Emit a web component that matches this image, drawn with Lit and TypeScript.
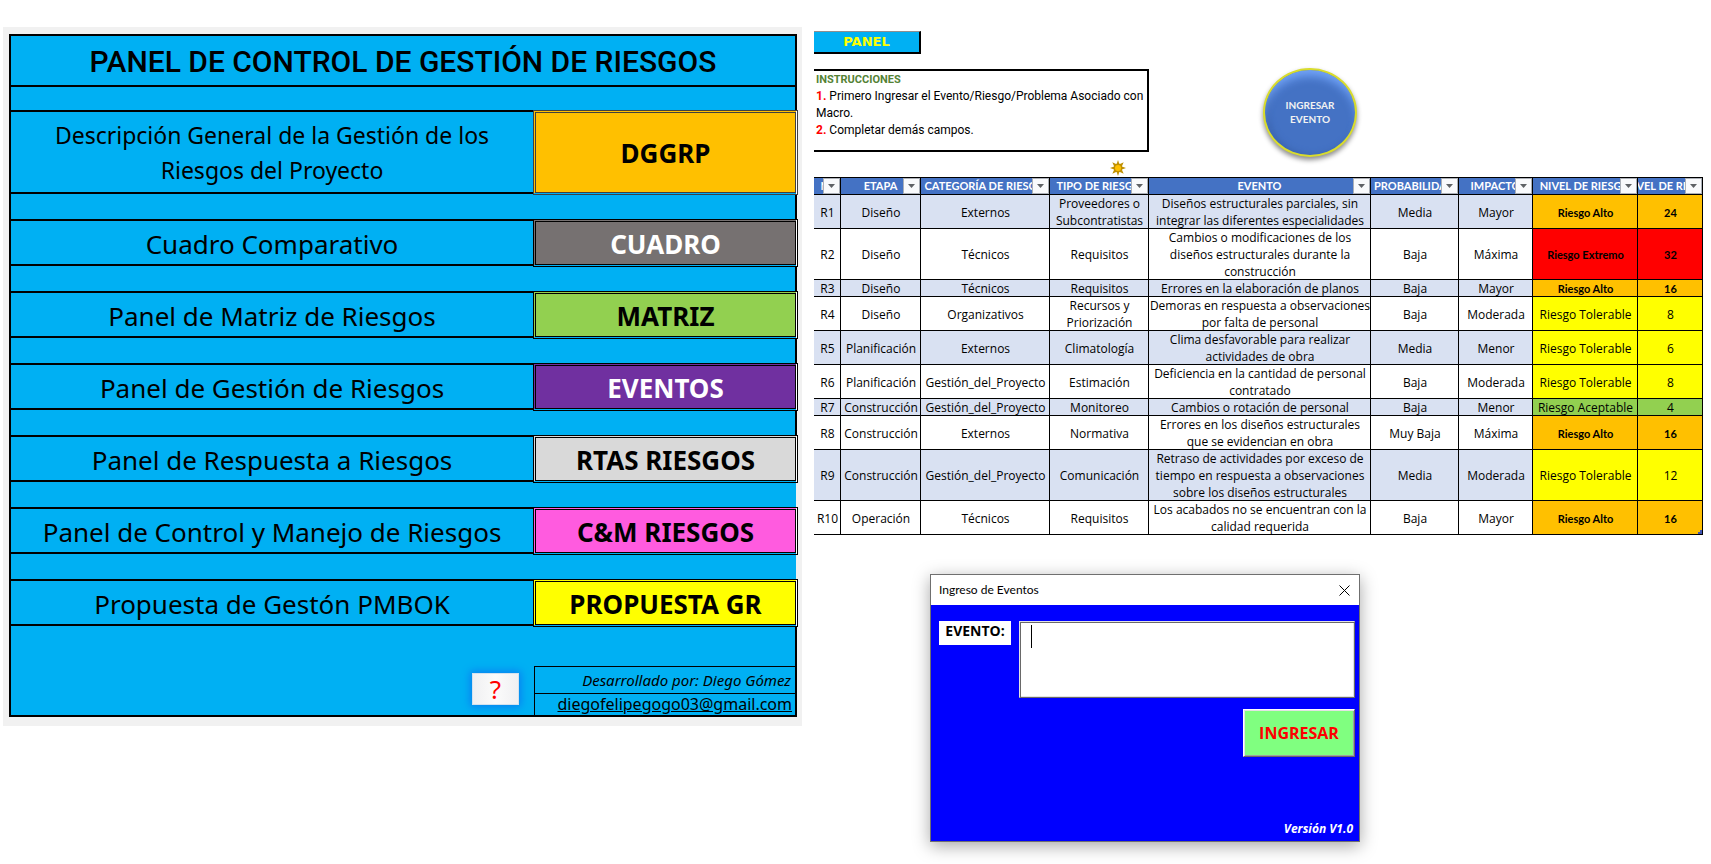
import { LitElement, html, css } from "lit";
import { customElement, property } from "lit/decorators.js";

interface Destination {
  label: string;
  action: string;
  tone: string;
  tall?: boolean;
  open?: boolean;
}

interface RiskEvent {
  id: string;
  stage: string;
  category: string;
  type: string[];
  event: string[];
  probability: string;
  impact: string;
  level: string;
  score: number;
}

const DESTINATIONS: Destination[] = [
  { label: "Descripción General de la Gestión de los Riesgos del Proyecto", action: "DGGRP", tone: "amber", tall: true },
  { label: "Cuadro Comparativo", action: "CUADRO", tone: "gray" },
  { label: "Panel de Matriz de Riesgos", action: "MATRIZ", tone: "green" },
  { label: "Panel de Gestión de Riesgos", action: "EVENTOS", tone: "purple" },
  { label: "Panel de Respuesta a Riesgos", action: "RTAS RIESGOS", tone: "silver" },
  { label: "Panel de Control y Manejo de Riesgos", action: "C&M RIESGOS", tone: "pink", open: true },
  { label: "Propuesta de Gestón PMBOK", action: "PROPUESTA GR", tone: "yellow", open: true },
];

const COLUMNS: { title: string; width: number }[] = [
  { title: "N°", width: 27 },
  { title: "ETAPA", width: 80 },
  { title: "CATEGORÍA DE RIESGO", width: 129 },
  { title: "TIPO DE RIESGO", width: 99 },
  { title: "EVENTO", width: 222 },
  { title: "PROBABILIDAD", width: 88 },
  { title: "IMPACTO", width: 74 },
  { title: "NIVEL DE RIESGO", width: 105 },
  { title: "NIVEL DE RIESGO", width: 65 },
];

const EVENTS: RiskEvent[] = [
  { id: "R1", stage: "Diseño", category: "Externos", type: ["Proveedores o", "Subcontratistas"], event: ["Diseños estructurales parciales, sin", "integrar las diferentes especialidades"], probability: "Media", impact: "Mayor", level: "Alto", score: 24 },
  { id: "R2", stage: "Diseño", category: "Técnicos", type: ["Requisitos"], event: ["Cambios o modificaciones de los", "diseños estructurales durante la", "construcción"], probability: "Baja", impact: "Máxima", level: "Extremo", score: 32 },
  { id: "R3", stage: "Diseño", category: "Técnicos", type: ["Requisitos"], event: ["Errores en la elaboración de planos"], probability: "Baja", impact: "Mayor", level: "Alto", score: 16 },
  { id: "R4", stage: "Diseño", category: "Organizativos", type: ["Recursos y", "Priorización"], event: ["Demoras en respuesta a observaciones", "por falta de personal"], probability: "Baja", impact: "Moderada", level: "Tolerable", score: 8 },
  { id: "R5", stage: "Planificación", category: "Externos", type: ["Climatología"], event: ["Clima desfavorable para realizar", "actividades de obra"], probability: "Media", impact: "Menor", level: "Tolerable", score: 6 },
  { id: "R6", stage: "Planificación", category: "Gestión_del_Proyecto", type: ["Estimación"], event: ["Deficiencia en la cantidad de personal", "contratado"], probability: "Baja", impact: "Moderada", level: "Tolerable", score: 8 },
  { id: "R7", stage: "Construcción", category: "Gestión_del_Proyecto", type: ["Monitoreo"], event: ["Cambios o rotación de personal"], probability: "Baja", impact: "Menor", level: "Aceptable", score: 4 },
  { id: "R8", stage: "Construcción", category: "Externos", type: ["Normativa"], event: ["Errores en los diseños estructurales", "que se evidencian en obra"], probability: "Muy Baja", impact: "Máxima", level: "Alto", score: 16 },
  { id: "R9", stage: "Construcción", category: "Gestión_del_Proyecto", type: ["Comunicación"], event: ["Retraso de actividades por exceso de", "tiempo en respuesta a observaciones", "sobre los diseños estructurales"], probability: "Media", impact: "Moderada", level: "Tolerable", score: 12 },
  { id: "R10", stage: "Operación", category: "Técnicos", type: ["Requisitos"], event: ["Los acabados no se encuentran con la", "calidad requerida"], probability: "Baja", impact: "Mayor", level: "Alto", score: 16 },
];

const lines = (parts: string[]) => parts.map((p, i) => (i ? html`<br />${p}` : p));

@customElement("control-panel")
export class ControlPanel extends LitElement {
  static styles = css`
    :host {
      display: block;
      background: #f1f1f1;
      padding: 7px 5px 9px 6px;
      font-family: "Noto Sans", "Open Sans", sans-serif;
      color: #000;
    }
    * {
      box-sizing: border-box;
    }
    .frame {
      background: #00b0f3;
      border: 2px solid #000;
    }
    .title {
      margin: 0;
      padding-top: 2px;
      height: 49px;
      display: flex;
      align-items: center;
      justify-content: center;
      font: 500 30px/36px Roboto, sans-serif;
      white-space: nowrap;
    }
    .spacer {
      height: 25px;
    }
    .spacer.first {
      border-top: 2px solid #000;
    }
    .spacer.open {
      margin-right: -2px;
      background: #00b0f3;
      border-right: 1px solid #f1f1f1;
    }
    .row {
      display: flex;
      height: 47px;
      border-top: 2px solid #000;
      border-bottom: 2px solid #000;
    }
    .row.tall {
      height: 84px;
    }
    .label {
      flex: 1;
      min-width: 0;
      padding: 4px 40px 0;
      display: flex;
      align-items: center;
      justify-content: center;
      text-align: center;
      font-size: 26px;
      line-height: 35px;
      white-space: nowrap;
    }
    .tall .label {
      padding-top: 2px;
      font-size: 23px;
      white-space: normal;
    }
    .go {
      flex: 0 0 265px;
      margin: -2px -3px -3px 0;
      padding: 1px;
      border: 1px solid #000;
      display: flex;
      position: relative;
      background-image: linear-gradient(#fff, #fff), linear-gradient(#00b0f3, #00b0f3);
      background-size: 1px 100%, 100% 1px;
      background-position: right, bottom;
      background-repeat: no-repeat;
      font: 700 26px/35px "Noto Sans", sans-serif;
      color: #000;
    }
    .go span {
      flex: 1;
      align-self: stretch;
      display: flex;
      align-items: center;
      justify-content: center;
      padding-top: 2px;
      border: 1px solid #000;
    }
    .amber {
      background-color: #ffc000;
      border-color: #404040;
    }
    .amber span {
      border-color: #404040;
    }
    .gray {
      background-color: #767171;
      color: #fff;
    }
    .green {
      background-color: #92d050;
    }
    .purple {
      background-color: #7030a0;
      color: #fff;
    }
    .silver {
      background-color: #d9d9d9;
    }
    .pink {
      background-color: #ff5bdf;
    }
    .yellow {
      background-color: #ffff00;
    }
    .foot {
      display: flex;
      justify-content: flex-end;
      align-items: flex-end;
      height: 89px;
    }
    .help {
      width: 47px;
      height: 32px;
      margin: 0 15px 10px 0;
      padding: 0;
      border: 1px solid #d4e2ee;
      background: linear-gradient(90deg, #f0f0f2, #fbfbfb 50%, #f0f0f2);
      box-shadow: 0 0 8px 2px #0a80f0;
      color: #f00;
      font: 26px/30px "Noto Sans", sans-serif;
    }
    .credits {
      width: 261px;
      height: 49px;
      border: solid #000;
      border-width: 1px 0 0 1px;
      text-align: right;
    }
    .author {
      height: 27px;
      padding-right: 4px;
      border-bottom: 1px solid #000;
      font-size: 15px;
      line-height: 26px;
      font-style: italic;
    }
    .mail {
      display: block;
      padding-right: 3px;
      color: #000;
      font-size: 16px;
      line-height: 21px;
    }
  `;

  render() {
    return html`
      <div class="frame">
        <h1 class="title">PANEL DE CONTROL DE GESTIÓN DE RIESGOS</h1>
        ${DESTINATIONS.map(
          (d, i) => html`
            <div class="spacer ${i === 0 ? "first" : ""} ${d.open ? "open" : ""}"></div>
            <div class="row ${d.tall ? "tall" : ""}">
              <div class="label">${d.label}</div>
              <button class="go ${d.tone}" type="button"><span>${d.action}</span></button>
            </div>
          `
        )}
        <div class="foot">
          <button class="help" type="button" aria-label="Ayuda">?</button>
          <div class="credits">
            <div class="author">Desarrollado por: Diego Gómez</div>
            <a class="mail" href="mailto:diegofelipegogo03@gmail.com">diegofelipegogo03@gmail.com</a>
          </div>
        </div>
      </div>
    `;
  }
}

@customElement("event-table")
export class EventTable extends LitElement {
  @property({ attribute: false }) events: RiskEvent[] = [];

  static styles = css`
    :host {
      display: block;
      font: 12px/17px "Open Sans", "Noto Sans", sans-serif;
      color: #000;
    }
    table {
      width: 100%;
      table-layout: fixed;
      border-spacing: 0;
      text-align: center;
    }
    th,
    td {
      position: relative;
      padding: 0;
      white-space: nowrap;
      box-shadow: inset -1px -1px 0 #000;
    }
    th {
      height: 18px;
      background: #4472c4;
      box-shadow: inset -1px -1px 0 #000, inset 0 1px 0 #000;
      font: 700 11px/18px Lato, sans-serif;
      color: #fff;
    }
    .head {
      display: flex;
      justify-content: center;
      overflow: hidden;
      margin-right: 1px;
    }
    .filter {
      position: absolute;
      top: 1px;
      right: 1px;
      width: 17px;
      height: 16px;
      padding: 0;
      border: 1px solid #abb0b8;
      background: #f9fafc;
      display: grid;
      place-items: center;
    }
    tbody tr:nth-child(odd) {
      background: #d9e1f2;
    }
    .Alto,
    .Extremo {
      font: 700 11px/17px Lato, sans-serif;
    }
    .Alto {
      background: #ffc000;
    }
    .Extremo {
      background: #ff0000;
    }
    .Tolerable {
      background: #ffff00;
    }
    .Aceptable {
      background: #92d050;
    }
    .grip {
      position: absolute;
      right: 1px;
      bottom: 1px;
    }
  `;

  render() {
    const last = this.events.length - 1;
    return html`
      <table>
        <colgroup>
          ${COLUMNS.map((c) => html`<col style="width:${c.width}px" />`)}
        </colgroup>
        <thead>
          <tr>
            ${COLUMNS.map(
              (c) => html`<th scope="col">
                <div class="head"><span>${c.title}</span></div>
                <button class="filter" type="button" aria-label="Filtrar ${c.title}">
                  <svg width="7" height="4" viewBox="0 0 7 4"><path d="M0 0h7L3.5 4z" fill="#5f6266" /></svg>
                </button>
              </th>`
            )}
          </tr>
        </thead>
        <tbody>
          ${this.events.map(
            (e, i) => html`<tr>
              <td>${e.id}</td>
              <td>${e.stage}</td>
              <td>${e.category}</td>
              <td>${lines(e.type)}</td>
              <td>${lines(e.event)}</td>
              <td>${e.probability}</td>
              <td>${e.impact}</td>
              <td class=${e.level}>Riesgo ${e.level}</td>
              <td class=${e.level}>
                ${e.score}${i === last
                  ? html`<svg class="grip" width="4" height="4" viewBox="0 0 4 4"><path d="M4 0v4H0V2h2V0z" fill="#4054b2" /></svg>`
                  : ""}
              </td>
            </tr>`
          )}
        </tbody>
      </table>
    `;
  }
}

@customElement("event-dialog")
export class EventDialog extends LitElement {
  static styles = css`
    :host {
      display: block;
      border: 1px solid #6f6f6f;
      background: #0000ff;
      box-shadow: 0 4px 16px rgba(0, 0, 0, 0.35);
      color: #000;
    }
    * {
      box-sizing: border-box;
    }
    .bar {
      display: flex;
      align-items: center;
      justify-content: space-between;
      height: 30px;
      padding: 0 9px 0 8px;
      background: #fff;
      font: 12px/30px Lato, sans-serif;
    }
    .close {
      display: grid;
      padding: 0;
      border: 0;
      background: none;
    }
    .body {
      display: grid;
      grid-template-columns: 72px 1fr;
      gap: 11px 8px;
      align-items: start;
      min-height: 236px;
      padding: 16px 4px 4px 8px;
      grid-template-rows: auto auto 1fr;
    }
    .name {
      height: 24px;
      background: #fff;
      text-align: center;
      font: 700 14px/20px "Open Sans", sans-serif;
    }
    .field {
      position: relative;
      display: grid;
    }
    textarea {
      height: 77px;
      padding: 2px 10px;
      border: 1px solid;
      border-color: #e3e3e3 #696969 #696969 #e3e3e3;
      box-shadow: inset 1px 1px 0 #696969, inset -1px -1px 0 #e3e3e3;
      background: #fff;
      resize: none;
      outline: none;
      font: 16px/23px "Open Sans", sans-serif;
    }
    .caret {
      position: absolute;
      left: 12px;
      top: 4px;
      width: 1px;
      height: 23px;
      background: #000;
    }
    .submit {
      grid-column: 1 / -1;
      justify-self: end;
      width: 112px;
      height: 48px;
      padding: 0;
      border: 1px solid;
      border-color: #fff #696969 #696969 #fff;
      box-shadow: inset 1px 1px 0 #e3e3e3, inset -1px -1px 0 #a0a0a0;
      background: #80ff80;
      color: #f00;
      font: 700 16px/20px "Open Sans", sans-serif;
    }
    .version {
      grid-column: 1 / -1;
      place-self: end;
      padding-right: 2px;
      color: #fff;
      font: italic 700 12px/17px "Open Sans", sans-serif;
    }
  `;

  render() {
    return html`
      <div class="bar">
        <span>Ingreso de Eventos</span>
        <button class="close" type="button" aria-label="Cerrar">
          <svg width="11" height="11" viewBox="0 0 11 11"><path d="M.5.5l10 10M10.5.5l-10 10" stroke="#000" fill="none" /></svg>
        </button>
      </div>
      <div class="body">
        <label class="name" for="event">EVENTO:</label>
        <div class="field">
          <textarea id="event"></textarea>
          <span class="caret"></span>
        </div>
        <button class="submit" type="button">INGRESAR</button>
        <span class="version">Versión V1.0</span>
      </div>
    `;
  }
}

@customElement("app-root")
export class AppRoot extends LitElement {
  static styles = css`
    :host {
      display: grid;
      grid-template-columns: minmax(0, 799fr) minmax(0, 889fr);
      gap: 12px;
      align-items: start;
      min-height: 100vh;
      box-sizing: border-box;
      padding: 27px 8px 0 3px;
      background: #fff;
      overflow: hidden;
    }
    * {
      box-sizing: border-box;
    }
    .log {
      padding-top: 4px;
    }
    .intro {
      display: flex;
      align-items: flex-start;
      gap: 114px;
    }
    .guide {
      width: 335px;
    }
    .panel {
      display: block;
      width: 107px;
      height: 23px;
      padding: 0;
      border: solid #000;
      border-width: 1px 2px 2px 0;
      border-top-color: #8f8f8f;
      background: #00b0f3;
      color: #ffff00;
      font: 700 13px/20px "DejaVu Sans", sans-serif;
    }
    .notes {
      margin-top: 15px;
      height: 83px;
      padding: 0 2px;
      border: solid #000;
      border-width: 2px 2px 2px 0;
      font: 12px/17px Roboto, sans-serif;
      color: #000;
    }
    .notes h2 {
      margin: 0;
      font: 700 11px/17px Roboto, sans-serif;
      color: #548235;
    }
    .notes p {
      margin: 0;
    }
    .notes b {
      color: #f00;
    }
    .enter {
      width: 94px;
      height: 89px;
      margin-top: 37px;
      padding: 0 0 2px;
      border: 2px solid #d9dc2c;
      border-radius: 50%;
      background: #4472c4;
      box-shadow: 0 3px 5px rgba(0, 0, 0, 0.45), inset 0 9px 10px -3px #74a6fa, inset 3px 0 6px #3a63ad;
      color: #f2f2f2;
      font: 700 10px/14px Lato, sans-serif;
    }
    .mark {
      display: flex;
      height: 20px;
      padding: 3px 0 0 296px;
    }
    .dialog {
      width: 430px;
      margin: 39px 0 0 116px;
    }
  `;

  render() {
    return html`
      <control-panel></control-panel>
      <section class="log">
        <div class="intro">
          <div class="guide">
            <button class="panel" type="button">PANEL</button>
            <div class="notes">
              <h2>INSTRUCCIONES</h2>
              <p><b>1.</b> Primero Ingresar el Evento/Riesgo/Problema Asociado con Macro.</p>
              <p><b>2.</b> Completar demás campos.</p>
            </div>
          </div>
          <button class="enter" type="button">INGRESAR<br />EVENTO</button>
        </div>
        <div class="mark">
          <svg width="16" height="16" viewBox="0 0 16 16">
            <path d="M8 0l1.4 4.2 4.3-1.9-1.9 4.3L16 8l-4.2 1.4 1.9 4.3-4.3-1.9L8 16l-1.4-4.2-4.3 1.9 1.9-4.3L0 8l4.2-1.4-1.9-4.3 4.3 1.9z" fill="#bf9000" />
            <circle cx="8" cy="8" r="4.4" fill="#bf9000" />
            <circle cx="8" cy="8" r="3" fill="#ffc000" />
          </svg>
        </div>
        <event-table .events=${EVENTS}></event-table>
        <event-dialog class="dialog"></event-dialog>
      </section>
    `;
  }
}
